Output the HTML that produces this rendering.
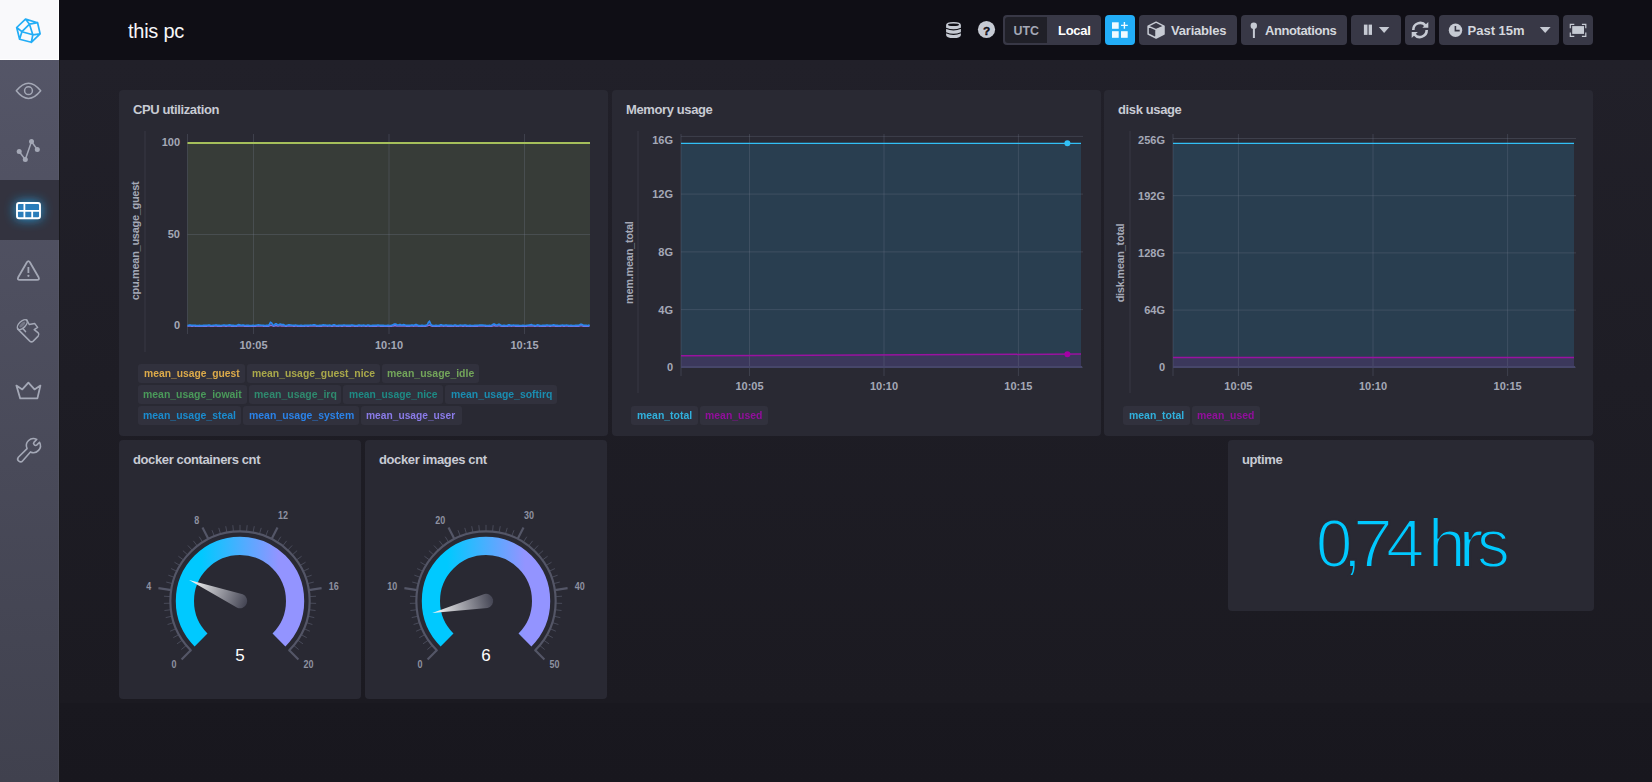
<!DOCTYPE html>
<html><head><meta charset="utf-8">
<style>
*{box-sizing:border-box;margin:0;padding:0}
html,body{width:1652px;height:782px;overflow:hidden;background:#1c1c21;font-family:"Liberation Sans",sans-serif}
#content{position:absolute;left:59px;top:60px;width:1593px;height:722px;background:linear-gradient(to bottom,#212029 0px,#1b1a21 643px,#19181f 643px,#18171e 722px);border-left:1px solid #19191d}
#sidebar{position:absolute;left:0;top:0;width:59px;height:782px;background:linear-gradient(to bottom,#565769 0%,#40414e 100%);border-right:1px solid rgba(255,255,255,0.04)}
#logo{position:absolute;left:0;top:0;width:59px;height:60px;background:#f9f9fb;border-right:1px solid #fff;border-bottom:1px solid #fff}
#activenav{position:absolute;left:0;top:180px;width:59px;height:60px;background:#33333f}
#header{position:absolute;left:59px;top:0;width:1593px;height:60px;background:#0f0e15}
#title{position:absolute;left:128px;top:20.8px;font-size:20px;line-height:20px;letter-spacing:-0.25px;color:#f6f6f8;white-space:nowrap}
.btn{position:absolute;top:15px;height:30px;background:#383846;border-radius:4px;color:#d4d7dd;font-weight:bold;font-size:13px;white-space:nowrap}
.btn span{position:absolute;top:8px}
.cell{position:absolute;background:#292933;border-radius:4px}
.cname{position:absolute;left:14px;top:11.8px;font-size:13px;font-weight:bold;color:#c8cbd4;white-space:nowrap;letter-spacing:-0.38px}
.lg{position:absolute;height:19px;border-radius:3px;background:#31313d}
.lgt{position:absolute;font-size:11.6px;line-height:14px;font-weight:bold;white-space:nowrap;transform-origin:0 0}
svg{position:absolute;left:0;top:0;overflow:visible}
.txt{position:absolute;white-space:nowrap}
</style></head><body>
<div id="content"></div>
<div id="header"></div>
<div id="title">this pc</div>
<div id="sidebar"></div>
<div id="activenav"></div>
<div id="logo"></div>

<!-- header buttons -->
<div class="btn" style="left:1003px;width:98px;background:#383846"></div>
<div class="btn" style="left:1005px;top:17px;width:42px;height:26px;background:#202028;border-radius:3px 0 0 3px"></div>
<div class="txt" style="left:1013.5px;top:23.6px;font-size:12.4px;color:#a4a8b6;font-weight:bold">UTC</div>
<div class="txt" style="left:1058px;top:23px;font-size:13px;color:#fff;font-weight:bold;letter-spacing:-0.3px">Local</div>
<div class="btn" style="left:1105px;width:30px;background:#22adf6"></div>
<div class="btn" style="left:1139px;width:98px"><span style="left:32px;letter-spacing:-0.2px">Variables</span></div>
<div class="btn" style="left:1241px;width:106px"><span style="left:24px;letter-spacing:-0.4px">Annotations</span></div>
<div class="btn" style="left:1351px;width:50px"></div>
<div class="btn" style="left:1405px;width:30px"></div>
<div class="btn" style="left:1439px;width:120px"><span style="left:28.5px">Past 15m</span></div>
<div class="btn" style="left:1563px;width:30px"></div>

<!-- cells -->
<div class="cell" style="left:119px;top:90px;width:489px;height:346px"><div class="cname">CPU utilization</div></div>
<div class="cell" style="left:612px;top:90px;width:489px;height:346px"><div class="cname">Memory usage</div></div>
<div class="cell" style="left:1104px;top:90px;width:489px;height:346px"><div class="cname">disk usage</div></div>
<div class="cell" style="left:119px;top:440px;width:242px;height:259px"><div class="cname">docker containers cnt</div></div>
<div class="cell" style="left:365px;top:440px;width:242px;height:259px"><div class="cname">docker images cnt</div></div>
<div class="cell" style="left:1228px;top:440px;width:366px;height:171px"><div class="cname">uptime</div></div>

<!--ICONS-->
<svg width="1652" height="782">
<defs><filter id="glow" x="-150%" y="-200%" width="400%" height="500%"><feGaussianBlur stdDeviation="6"/></filter></defs>
<path d="M25.5 19.1L37.6 22.7M37.6 22.7L40.1 33.8M40.1 33.8L31.3 42.3M31.3 42.3L19.6 39.2M19.6 39.2L16.7 27.5M16.7 27.5L25.5 19.1M25.5 19.1L29.5 24.2M29.5 24.2L37.6 22.7M29.5 24.2L21.9 31.7M16.7 27.5L21.9 31.7M21.9 31.7L32.8 34.8M29.5 24.2L32.8 34.8M32.8 34.8L40.1 33.8M32.8 34.8L31.3 42.3M21.9 31.7L19.6 39.2" stroke="#22adf6" stroke-width="1.7" stroke-linejoin="round" stroke-linecap="round" fill="none"/>
<path d="M16.3 90.8Q28.5 75.5 40.7 90.8Q28.5 106 16.3 90.8Z" stroke="#a4a8b6" stroke-width="1.5" fill="none" stroke-linejoin="round"/>
<circle cx="28.5" cy="90.7" r="3.9" stroke="#a4a8b6" stroke-width="1.5" fill="none"/>
<polyline points="19.2,151.5 25.3,159.6 31.5,141.5 37.3,149.5" stroke="#a4a8b6" stroke-width="1.5" fill="none"/>
<circle cx="19.2" cy="151.5" r="2.5" fill="#a4a8b6"/>
<circle cx="25.3" cy="159.6" r="2.5" fill="#a4a8b6"/>
<circle cx="31.5" cy="141.5" r="2.5" fill="#a4a8b6"/>
<circle cx="37.3" cy="149.5" r="2.5" fill="#a4a8b6"/>
<rect x="16" y="202" width="25" height="17" rx="3" fill="#22adf6" opacity="0.9" filter="url(#glow)"/>
<rect x="17" y="203" width="23" height="15.2" rx="2" fill="#2a7dba" stroke="#fff" stroke-width="1.9"/>
<path d="M17 210.8H40M24.4 203V218.2M32.2 210.8V218.2" stroke="#fff" stroke-width="1.8" fill="none"/>
<path d="M26.9 262.3Q28.4 260 29.9 262.3L38.6 277.3Q39.8 279.9 37.1 279.9H19.7Q17 279.9 18.2 277.3Z" stroke="#a4a8b6" stroke-width="1.8" fill="none" stroke-linejoin="round"/>
<path d="M28.4 267V273" stroke="#a4a8b6" stroke-width="1.8"/>
<circle cx="28.4" cy="275.8" r="1.1" fill="#a4a8b6"/>
<g stroke="#a4a8b6" stroke-width="1.5" fill="none" stroke-linejoin="round" stroke-linecap="round"><ellipse cx="22.3" cy="324.6" rx="6.2" ry="3.2" transform="rotate(-45 22.3 324.6)"/><path d="M17.6 328.9L29.8 341.1Q31.5 342.6 33.2 341.1L38.2 336.1Q39.6 334.4 38.2 332.8L34.2 329.6L37.6 327.4L34.6 323.4L29.2 324.5L26.7 319.8"/><path d="M23.3 329.1L25.5 331.6"/></g>
<ellipse cx="22.3" cy="324.6" rx="3.8" ry="1.5" transform="rotate(-45 22.3 324.6)" fill="#a4a8b6" opacity="0.45"/>
<path d="M20.2 398.4H37.4L40.4 385.6L34.5 389.4L28.4 382.6L22.3 389.4L16.4 385.6Z" stroke="#a4a8b6" stroke-width="1.8" fill="none" stroke-linejoin="round"/>
<path d="M27.06 448.56L18.34 457.26A2.4 2.4 0 0 0 22.74 460.66L30.44 451.94A7 7 0 0 0 39.56 442.27L36.93 444.89A2 2 0 0 1 34.11 442.07L36.73 439.44A7 7 0 0 0 27.06 448.56Z" stroke="#a4a8b6" stroke-width="1.6" fill="none" stroke-linejoin="round"/>
<g><path d="M946.1 25Q946.1 22 953.5 22Q960.9 22 960.9 25V35Q960.9 38.1 953.5 38.1Q946.1 38.1 946.1 35Z" fill="#c6cad3"/><ellipse cx="953.5" cy="24.7" rx="5.6" ry="1.3" fill="#0f0e15"/><path d="M946 28.2Q953.5 31.6 961 28.2M946 32.7Q953.5 36.1 961 32.7" stroke="#0f0e15" stroke-width="1.1" fill="none"/></g>
<circle cx="986.5" cy="29.5" r="8.6" fill="#c6cad3"/>
<text x="986.6" y="34.9" text-anchor="middle" font-family="Liberation Sans" font-weight="bold" font-size="11.8" fill="#0f0e15" stroke="#0f0e15" stroke-width="0.4">?</text>
<g fill="#f0faff"><rect x="1112" y="22.3" width="6.7" height="6.5"/><rect x="1112" y="31.2" width="6.7" height="6.6"/><rect x="1121" y="31.2" width="6.7" height="6.6"/></g>
<path d="M1124.4 22V28.8M1121 25.4H1127.8" stroke="#f0faff" stroke-width="1.4"/>
<path d="M1156 29.2L1164 26.1V34L1156 38Z" fill="#c6cad3"/>
<path d="M1156.1 22.2L1164 26.1V34L1156.1 38L1148.1 34V26.1Z M1148.1 26.1L1156 29.6L1164 26.1 M1156 29.6V38" stroke="#c6cad3" stroke-width="1.5" fill="none" stroke-linejoin="round"/>
<circle cx="1253.8" cy="25.8" r="3.2" fill="#c6cad3"/><rect x="1252.9" y="27" width="2" height="11" fill="#c6cad3"/>
<rect x="1363.9" y="24.6" width="3.6" height="10.3" fill="#c6cad3"/><rect x="1368.6" y="24.6" width="3.4" height="10.3" fill="#c6cad3"/>
<path d="M1378.9 27H1389.4L1384.1 33Z" fill="#c6cad3"/>
<g fill="none" stroke="#c6cad3" stroke-width="2.6"><path d="M1413.3 30A6.9 6.9 0 0 1 1425.6 25.6"/><path d="M1426.7 30A6.9 6.9 0 0 1 1414.4 34.4"/></g>
<path d="M1428.3 21.9V27.8H1422.3Z" fill="#c6cad3"/><path d="M1411.7 38V32H1417.8Z" fill="#c6cad3"/>
<circle cx="1455.5" cy="30.2" r="6.7" fill="#c6cad3"/><path d="M1455.4 26V30.6H1459.7" stroke="#383846" stroke-width="1.6" fill="none"/>
<path d="M1539.8 27H1550.6L1545.2 33Z" fill="#c6cad3"/>
<rect x="1572.2" y="26.1" width="11.8" height="7.8" fill="#c6cad3"/>
<path d="M1570.3 28.2V24.4H1574.3M1581.9 24.4H1585.8V28.2M1585.8 32.6V36.4H1581.9M1574.3 36.4H1570.3V32.6" stroke="#c6cad3" stroke-width="1.2" fill="none"/>
</svg>
<!--CHARTS-->
<svg width="1652" height="782" style="font-family:'Liberation Sans',sans-serif">
<line x1="145" y1="131" x2="145" y2="352" stroke="#33333f" stroke-width="1.5"/>
<rect x="187.5" y="143" width="402.5" height="182.5" fill="#373c38"/>
<line x1="187.5" y1="143.5" x2="590" y2="143.5" stroke="rgba(120,125,142,0.28)" stroke-width="1"/>
<line x1="187.5" y1="234.5" x2="590" y2="234.5" stroke="rgba(120,125,142,0.28)" stroke-width="1"/>
<line x1="187.5" y1="325.5" x2="590" y2="325.5" stroke="rgba(120,125,142,0.28)" stroke-width="1"/>
<line x1="187.5" y1="134" x2="187.5" y2="334" stroke="rgba(120,125,142,0.28)" stroke-width="1"/>
<line x1="253.5" y1="134" x2="253.5" y2="334" stroke="rgba(120,125,142,0.28)" stroke-width="1"/>
<line x1="389" y1="134" x2="389" y2="334" stroke="rgba(120,125,142,0.28)" stroke-width="1"/>
<line x1="524.5" y1="134" x2="524.5" y2="334" stroke="rgba(120,125,142,0.28)" stroke-width="1"/>
<line x1="187.5" y1="143" x2="590" y2="143" stroke="#a5bf5b" stroke-width="2"/>
<polyline points="187.5,326.22 188.5,326.17 189.5,326.13 190.5,326.14 191.5,326.18 192.5,326.19 193.5,326.16 194.5,326.15 195.5,326.19 196.5,326.25 197.5,326.26 198.5,326.23 199.5,326.21 200.5,326.24 201.5,326.27 202.5,326.24 203.5,326.18 204.5,326.15 205.5,326.18 206.5,326.20 207.5,326.17 208.5,326.13 209.5,326.13 210.5,326.18 211.5,326.22 212.5,326.21 213.5,326.19 214.5,326.15 215.5,326.08 216.5,326.10 217.5,326.18 218.5,326.20 219.5,326.20 220.5,326.23 221.5,326.22 222.5,326.17 223.5,326.13 224.5,326.14 225.5,326.19 226.5,326.19 227.5,326.16 228.5,326.11 229.5,326.07 230.5,326.12 231.5,326.21 232.5,326.22 233.5,326.21 234.5,326.25 235.5,326.27 236.5,326.23 237.5,326.12 238.5,326.00 239.5,326.03 240.5,326.15 241.5,326.16 242.5,326.12 243.5,326.14 244.5,326.19 245.5,326.22 246.5,326.20 247.5,326.19 248.5,326.22 249.5,326.27 250.5,326.28 251.5,326.23 252.5,326.20 253.5,326.21 254.5,326.23 255.5,326.21 256.5,326.16 257.5,326.09 258.5,326.04 259.5,326.08 260.5,326.15 261.5,326.15 262.5,326.15 263.5,326.21 264.5,326.26 265.5,326.25 266.5,326.21 267.5,326.22 268.5,326.25 269.5,325.83 270.5,325.29 271.5,325.44 272.5,325.92 273.5,326.19 274.5,326.06 275.5,325.75 276.5,325.72 277.5,326.01 278.5,326.08 279.5,325.86 280.5,325.84 281.5,325.97 282.5,325.93 283.5,325.98 284.5,326.17 285.5,326.23 286.5,326.20 287.5,326.15 288.5,326.03 289.5,326.01 290.5,326.08 291.5,326.13 292.5,326.16 293.5,326.19 294.5,326.18 295.5,326.15 296.5,326.16 297.5,326.22 298.5,326.26 299.5,326.24 300.5,326.21 301.5,326.22 302.5,326.26 303.5,326.27 304.5,326.22 305.5,326.17 306.5,326.17 307.5,326.20 308.5,326.19 309.5,326.15 310.5,326.12 311.5,326.15 312.5,326.14 313.5,326.04 314.5,326.01 315.5,326.13 316.5,326.23 317.5,326.28 318.5,326.27 319.5,326.22 320.5,326.20 321.5,326.18 322.5,326.10 323.5,326.07 324.5,326.10 325.5,326.13 326.5,326.17 327.5,326.19 328.5,326.17 329.5,326.14 330.5,326.16 331.5,326.22 332.5,326.20 333.5,326.05 334.5,326.03 335.5,326.17 336.5,326.27 337.5,326.26 338.5,326.21 339.5,326.17 340.5,326.17 341.5,326.20 342.5,326.19 343.5,326.14 344.5,326.12 345.5,326.16 346.5,326.21 347.5,326.21 348.5,326.18 349.5,326.19 350.5,326.19 351.5,326.12 352.5,326.10 353.5,326.16 354.5,326.20 355.5,326.23 356.5,326.24 357.5,326.19 358.5,326.14 359.5,326.14 360.5,326.17 361.5,326.19 362.5,326.16 363.5,326.14 364.5,326.17 365.5,326.23 366.5,326.22 367.5,326.14 368.5,326.12 369.5,326.20 370.5,326.27 371.5,326.26 372.5,326.20 373.5,326.17 374.5,326.18 375.5,326.20 376.5,326.18 377.5,326.13 378.5,326.12 379.5,326.17 380.5,326.21 381.5,326.21 382.5,326.18 383.5,326.19 384.5,326.25 385.5,326.28 386.5,326.25 387.5,326.21 388.5,326.21 389.5,326.24 390.5,326.24 391.5,326.18 392.5,326.14 393.5,325.95 394.5,325.80 395.5,325.80 396.5,325.96 397.5,326.14 398.5,326.09 399.5,325.97 400.5,325.98 401.5,326.13 402.5,326.13 403.5,325.99 404.5,326.03 405.5,326.17 406.5,326.20 407.5,326.17 408.5,326.19 409.5,326.21 410.5,326.17 411.5,326.13 412.5,326.13 413.5,326.18 414.5,326.14 415.5,325.97 416.5,325.95 417.5,326.12 418.5,326.25 419.5,326.28 420.5,326.24 421.5,326.21 422.5,326.21 423.5,326.24 424.5,326.23 425.5,326.18 426.5,326.13 427.5,325.94 428.5,325.29 429.5,325.01 430.5,325.67 431.5,326.14 432.5,326.19 433.5,326.24 434.5,326.24 435.5,326.21 436.5,326.21 437.5,326.25 438.5,326.28 439.5,326.20 440.5,326.05 441.5,326.04 442.5,326.15 443.5,326.21 444.5,326.17 445.5,326.12 446.5,326.13 447.5,326.18 448.5,326.21 449.5,326.19 450.5,326.17 451.5,326.21 452.5,326.26 453.5,326.24 454.5,326.12 455.5,326.09 456.5,326.18 457.5,326.25 458.5,326.23 459.5,326.17 460.5,326.13 461.5,326.16 462.5,326.19 463.5,326.18 464.5,326.14 465.5,326.14 466.5,326.20 467.5,326.24 468.5,326.24 469.5,326.21 470.5,326.21 471.5,326.26 472.5,326.28 473.5,326.24 474.5,326.18 475.5,326.18 476.5,326.20 477.5,326.20 478.5,326.16 479.5,326.12 480.5,326.10 481.5,326.08 482.5,326.10 483.5,326.15 484.5,326.17 485.5,326.21 486.5,326.27 487.5,326.27 488.5,326.23 489.5,326.20 490.5,326.23 491.5,326.18 492.5,326.03 493.5,325.84 494.5,325.81 495.5,325.97 496.5,326.13 497.5,326.08 498.5,325.87 499.5,325.88 500.5,326.11 501.5,326.24 502.5,326.23 503.5,326.20 504.5,326.22 505.5,326.26 506.5,326.27 507.5,326.19 508.5,326.07 509.5,326.07 510.5,326.17 511.5,326.20 512.5,326.15 513.5,326.12 514.5,326.15 515.5,326.19 516.5,326.20 517.5,326.18 518.5,326.17 519.5,326.22 520.5,326.27 521.5,326.26 522.5,326.22 523.5,326.21 524.5,326.23 525.5,326.25 526.5,326.21 527.5,326.15 528.5,326.14 529.5,326.11 530.5,326.01 531.5,325.98 532.5,326.07 533.5,326.15 534.5,326.21 535.5,326.24 536.5,326.17 537.5,326.04 538.5,326.07 539.5,326.22 540.5,326.27 541.5,326.22 542.5,326.18 543.5,326.19 544.5,326.21 545.5,326.20 546.5,326.14 547.5,326.12 548.5,326.15 549.5,326.20 550.5,326.20 551.5,326.17 552.5,326.12 553.5,326.05 554.5,326.09 555.5,326.20 556.5,326.22 557.5,326.21 558.5,326.24 559.5,326.25 560.5,326.21 561.5,326.15 562.5,326.14 563.5,326.18 564.5,326.19 565.5,326.16 566.5,326.13 567.5,326.16 568.5,326.22 569.5,326.24 570.5,326.22 571.5,326.20 572.5,326.23 573.5,326.27 574.5,326.27 575.5,326.21 576.5,326.18 577.5,326.19 578.5,326.22 579.5,326.07 580.5,325.90 581.5,325.88 582.5,326.04 583.5,326.20 584.5,326.19 585.5,326.17 586.5,326.18 587.5,326.24 588.5,326.27 589.5,325.97" fill="none" stroke="#8a6fe0" stroke-width="1.4"/>
<polyline points="187.5,325.48 188.5,325.31 189.5,325.16 190.5,325.19 191.5,325.34 192.5,325.38 193.5,325.28 194.5,325.24 195.5,325.37 196.5,325.56 197.5,325.60 198.5,325.49 199.5,325.43 200.5,325.53 201.5,325.62 202.5,325.54 203.5,325.34 204.5,325.25 205.5,325.32 206.5,325.39 207.5,325.30 208.5,325.16 209.5,325.17 210.5,325.35 211.5,325.48 212.5,325.44 213.5,325.36 214.5,325.23 215.5,325.00 216.5,325.07 217.5,325.34 218.5,325.40 219.5,325.41 220.5,325.50 221.5,325.47 222.5,325.28 223.5,325.15 224.5,325.22 225.5,325.35 226.5,325.36 227.5,325.26 228.5,325.09 229.5,324.95 230.5,325.13 231.5,325.43 232.5,325.47 233.5,325.44 234.5,325.55 235.5,325.63 236.5,325.52 237.5,325.15 238.5,324.73 239.5,324.82 240.5,325.22 241.5,325.28 242.5,325.15 243.5,325.19 244.5,325.37 245.5,325.48 246.5,325.41 247.5,325.35 248.5,325.45 249.5,325.62 250.5,325.66 251.5,325.51 252.5,325.39 253.5,325.43 254.5,325.51 255.5,325.45 256.5,325.26 257.5,325.03 258.5,324.87 259.5,324.99 260.5,325.22 261.5,325.24 262.5,325.25 263.5,325.43 264.5,325.59 265.5,325.56 266.5,325.45 267.5,325.45 268.5,325.58 269.5,324.16 270.5,322.38 271.5,322.85 272.5,324.46 273.5,325.37 274.5,324.94 275.5,323.90 276.5,323.79 277.5,324.76 278.5,325.00 279.5,324.27 280.5,324.19 281.5,324.62 282.5,324.50 283.5,324.67 284.5,325.32 285.5,325.49 286.5,325.39 287.5,325.23 288.5,324.85 289.5,324.75 290.5,325.01 291.5,325.16 292.5,325.27 293.5,325.37 294.5,325.32 295.5,325.22 296.5,325.26 297.5,325.46 298.5,325.59 299.5,325.54 300.5,325.43 301.5,325.47 302.5,325.60 303.5,325.62 304.5,325.46 305.5,325.29 306.5,325.29 307.5,325.39 308.5,325.38 309.5,325.22 310.5,325.13 311.5,325.24 312.5,325.21 313.5,324.85 314.5,324.77 315.5,325.15 316.5,325.50 317.5,325.65 318.5,325.62 319.5,325.46 320.5,325.40 321.5,325.33 322.5,325.08 323.5,324.95 324.5,325.06 325.5,325.17 326.5,325.29 327.5,325.37 328.5,325.30 329.5,325.21 330.5,325.28 331.5,325.48 332.5,325.39 333.5,324.91 334.5,324.83 335.5,325.29 336.5,325.62 337.5,325.61 338.5,325.43 339.5,325.29 340.5,325.32 341.5,325.40 342.5,325.36 343.5,325.20 344.5,325.14 345.5,325.26 346.5,325.43 347.5,325.44 348.5,325.35 349.5,325.36 350.5,325.35 351.5,325.14 352.5,325.07 353.5,325.27 354.5,325.41 355.5,325.50 356.5,325.53 357.5,325.38 358.5,325.20 359.5,325.19 360.5,325.31 361.5,325.37 362.5,325.28 363.5,325.20 364.5,325.31 365.5,325.51 366.5,325.48 367.5,325.19 368.5,325.12 369.5,325.41 370.5,325.64 371.5,325.60 372.5,325.41 373.5,325.29 374.5,325.34 375.5,325.41 376.5,325.34 377.5,325.18 378.5,325.14 379.5,325.29 380.5,325.44 381.5,325.42 382.5,325.33 383.5,325.38 384.5,325.56 385.5,325.66 386.5,325.57 387.5,325.43 388.5,325.42 389.5,325.52 390.5,325.52 391.5,325.35 392.5,325.19 393.5,324.57 394.5,324.05 395.5,324.08 396.5,324.61 397.5,325.20 398.5,325.03 399.5,324.62 400.5,324.67 401.5,325.17 402.5,325.15 403.5,324.71 404.5,324.82 405.5,325.30 406.5,325.38 407.5,325.29 408.5,325.36 409.5,325.42 410.5,325.32 411.5,325.16 412.5,325.16 413.5,325.32 414.5,325.19 415.5,324.64 416.5,324.57 417.5,325.15 418.5,325.58 419.5,325.66 420.5,325.55 421.5,325.42 422.5,325.44 423.5,325.54 424.5,325.51 425.5,325.32 426.5,325.18 427.5,324.54 428.5,322.36 429.5,321.44 430.5,323.62 431.5,325.20 432.5,325.36 433.5,325.54 434.5,325.55 435.5,325.44 436.5,325.43 437.5,325.56 438.5,325.65 439.5,325.40 440.5,324.91 441.5,324.85 442.5,325.24 443.5,325.42 444.5,325.29 445.5,325.14 446.5,325.17 447.5,325.34 448.5,325.44 449.5,325.37 450.5,325.31 451.5,325.42 452.5,325.60 453.5,325.52 454.5,325.15 455.5,325.04 456.5,325.34 457.5,325.55 458.5,325.49 459.5,325.29 460.5,325.18 461.5,325.25 462.5,325.36 463.5,325.33 464.5,325.21 465.5,325.21 466.5,325.39 467.5,325.55 468.5,325.53 469.5,325.43 470.5,325.45 471.5,325.59 472.5,325.65 473.5,325.52 474.5,325.35 475.5,325.32 476.5,325.41 477.5,325.41 478.5,325.26 479.5,325.13 480.5,325.07 481.5,324.99 482.5,325.05 483.5,325.22 484.5,325.31 485.5,325.44 486.5,325.62 487.5,325.63 488.5,325.50 489.5,325.42 490.5,325.49 491.5,325.35 492.5,324.82 493.5,324.19 494.5,324.10 495.5,324.63 496.5,325.15 497.5,325.01 498.5,324.29 499.5,324.32 500.5,325.11 501.5,325.55 502.5,325.51 503.5,325.41 504.5,325.46 505.5,325.61 506.5,325.65 507.5,325.37 508.5,324.96 509.5,324.96 510.5,325.30 511.5,325.40 512.5,325.24 513.5,325.13 514.5,325.22 515.5,325.38 516.5,325.41 517.5,325.32 518.5,325.31 519.5,325.47 520.5,325.63 521.5,325.62 522.5,325.47 523.5,325.42 524.5,325.51 525.5,325.57 526.5,325.44 527.5,325.25 528.5,325.20 529.5,325.10 530.5,324.77 531.5,324.68 532.5,324.98 533.5,325.24 534.5,325.44 535.5,325.55 536.5,325.31 537.5,324.88 538.5,324.96 539.5,325.46 540.5,325.64 541.5,325.47 542.5,325.33 543.5,325.36 544.5,325.44 545.5,325.39 546.5,325.21 547.5,325.13 548.5,325.25 549.5,325.40 550.5,325.40 551.5,325.30 552.5,325.12 553.5,324.90 554.5,325.04 555.5,325.39 556.5,325.46 557.5,325.43 558.5,325.54 559.5,325.57 560.5,325.42 561.5,325.23 562.5,325.21 563.5,325.33 564.5,325.37 565.5,325.26 566.5,325.17 567.5,325.27 568.5,325.46 569.5,325.54 570.5,325.46 571.5,325.40 572.5,325.51 573.5,325.65 574.5,325.62 575.5,325.44 576.5,325.33 577.5,325.38 578.5,325.45 579.5,324.96 580.5,324.39 581.5,324.34 582.5,324.87 583.5,325.40 584.5,325.38 585.5,325.29 586.5,325.34 587.5,325.53 588.5,325.64 589.5,324.64" fill="none" stroke="#2a86ee" stroke-width="1.7"/>
<text x="180" y="146" text-anchor="end" font-size="11" font-weight="bold" fill="#a4a8b6">100</text>
<text x="180" y="238" text-anchor="end" font-size="11" font-weight="bold" fill="#a4a8b6">50</text>
<text x="180" y="329" text-anchor="end" font-size="11" font-weight="bold" fill="#a4a8b6">0</text>
<text x="253.5" y="348.5" text-anchor="middle" font-size="11" font-weight="bold" fill="#a4a8b6">10:05</text>
<text x="389" y="348.5" text-anchor="middle" font-size="11" font-weight="bold" fill="#a4a8b6">10:10</text>
<text x="524.5" y="348.5" text-anchor="middle" font-size="11" font-weight="bold" fill="#a4a8b6">10:15</text>
<text transform="translate(139.3,241) rotate(-90)" text-anchor="middle" font-size="11" font-weight="bold" letter-spacing="-0.3" fill="#a4a8b6">cpu.mean_usage_guest</text>
<line x1="638" y1="131" x2="638" y2="393" stroke="#33333f" stroke-width="1.5"/>
<rect x="681" y="143.3" width="400" height="224" fill="#293e50"/>
<path d="M681 355.8L1081 354.1V367.3H681Z" fill="#3b385c"/>
<line x1="681" y1="136.4" x2="1083" y2="136.4" stroke="rgba(120,125,142,0.28)" stroke-width="1"/>
<line x1="681" y1="194.1" x2="1083" y2="194.1" stroke="rgba(120,125,142,0.28)" stroke-width="1"/>
<line x1="681" y1="251.9" x2="1083" y2="251.9" stroke="rgba(120,125,142,0.28)" stroke-width="1"/>
<line x1="681" y1="309.6" x2="1083" y2="309.6" stroke="rgba(120,125,142,0.28)" stroke-width="1"/>
<line x1="681" y1="367.3" x2="1083" y2="367.3" stroke="rgba(120,125,142,0.28)" stroke-width="1"/>
<line x1="681" y1="134" x2="681" y2="376" stroke="rgba(120,125,142,0.28)" stroke-width="1"/>
<line x1="749.5" y1="134" x2="749.5" y2="376" stroke="rgba(120,125,142,0.28)" stroke-width="1"/>
<line x1="884" y1="134" x2="884" y2="376" stroke="rgba(120,125,142,0.28)" stroke-width="1"/>
<line x1="1018.4" y1="134" x2="1018.4" y2="376" stroke="rgba(120,125,142,0.28)" stroke-width="1"/>
<line x1="681" y1="367" x2="1082" y2="367" stroke="#46466a" stroke-width="2"/>
<line x1="681" y1="143.3" x2="1081" y2="143.3" stroke="#31c0f6" stroke-width="1.3"/>
<line x1="681" y1="355.8" x2="1081" y2="354.1" stroke="#9a12a0" stroke-width="1.5"/>
<circle cx="1067.4" cy="143.3" r="3" fill="#31c0f6"/>
<circle cx="1067.4" cy="354.16" r="3" fill="#a500a5"/>
<text x="673" y="144.0" text-anchor="end" font-size="11" font-weight="bold" fill="#a4a8b6">16G</text>
<text x="673" y="198.125" text-anchor="end" font-size="11" font-weight="bold" fill="#a4a8b6">12G</text>
<text x="673" y="255.85000000000002" text-anchor="end" font-size="11" font-weight="bold" fill="#a4a8b6">8G</text>
<text x="673" y="313.57500000000005" text-anchor="end" font-size="11" font-weight="bold" fill="#a4a8b6">4G</text>
<text x="673" y="371.3" text-anchor="end" font-size="11" font-weight="bold" fill="#a4a8b6">0</text>
<text x="749.5" y="389.8" text-anchor="middle" font-size="11" font-weight="bold" fill="#a4a8b6">10:05</text>
<text x="884" y="389.8" text-anchor="middle" font-size="11" font-weight="bold" fill="#a4a8b6">10:10</text>
<text x="1018.4" y="389.8" text-anchor="middle" font-size="11" font-weight="bold" fill="#a4a8b6">10:15</text>
<text transform="translate(632.5,262.7) rotate(-90)" text-anchor="middle" font-size="11" font-weight="bold" letter-spacing="-0.3" fill="#a4a8b6">mem.mean_total</text>
<line x1="1130" y1="131" x2="1130" y2="393" stroke="#33333f" stroke-width="1.5"/>
<rect x="1173" y="143.3" width="401" height="224" fill="#293e50"/>
<path d="M1173 357.6L1574 357.6V367.3H1173Z" fill="#3b385c"/>
<line x1="1173" y1="138.5" x2="1576" y2="138.5" stroke="rgba(120,125,142,0.28)" stroke-width="1"/>
<line x1="1173" y1="195.7" x2="1576" y2="195.7" stroke="rgba(120,125,142,0.28)" stroke-width="1"/>
<line x1="1173" y1="252.9" x2="1576" y2="252.9" stroke="rgba(120,125,142,0.28)" stroke-width="1"/>
<line x1="1173" y1="310.1" x2="1576" y2="310.1" stroke="rgba(120,125,142,0.28)" stroke-width="1"/>
<line x1="1173" y1="367.3" x2="1576" y2="367.3" stroke="rgba(120,125,142,0.28)" stroke-width="1"/>
<line x1="1173" y1="134" x2="1173" y2="376" stroke="rgba(120,125,142,0.28)" stroke-width="1"/>
<line x1="1238.4" y1="134" x2="1238.4" y2="376" stroke="rgba(120,125,142,0.28)" stroke-width="1"/>
<line x1="1373" y1="134" x2="1373" y2="376" stroke="rgba(120,125,142,0.28)" stroke-width="1"/>
<line x1="1507.6" y1="134" x2="1507.6" y2="376" stroke="rgba(120,125,142,0.28)" stroke-width="1"/>
<line x1="1173" y1="367" x2="1575" y2="367" stroke="#46466a" stroke-width="2"/>
<line x1="1173" y1="143.3" x2="1574" y2="143.3" stroke="#31c0f6" stroke-width="1.3"/>
<line x1="1173" y1="357.6" x2="1574" y2="357.6" stroke="#9a12a0" stroke-width="1.5"/>
<text x="1165" y="144.0" text-anchor="end" font-size="11" font-weight="bold" fill="#a4a8b6">256G</text>
<text x="1165" y="199.7" text-anchor="end" font-size="11" font-weight="bold" fill="#a4a8b6">192G</text>
<text x="1165" y="256.9" text-anchor="end" font-size="11" font-weight="bold" fill="#a4a8b6">128G</text>
<text x="1165" y="314.1" text-anchor="end" font-size="11" font-weight="bold" fill="#a4a8b6">64G</text>
<text x="1165" y="371.3" text-anchor="end" font-size="11" font-weight="bold" fill="#a4a8b6">0</text>
<text x="1238.4" y="389.8" text-anchor="middle" font-size="11" font-weight="bold" fill="#a4a8b6">10:05</text>
<text x="1373" y="389.8" text-anchor="middle" font-size="11" font-weight="bold" fill="#a4a8b6">10:10</text>
<text x="1507.6" y="389.8" text-anchor="middle" font-size="11" font-weight="bold" fill="#a4a8b6">10:15</text>
<text transform="translate(1123.5,263) rotate(-90)" text-anchor="middle" font-size="11" font-weight="bold" letter-spacing="-0.3" fill="#a4a8b6">disk.mean_total</text>
</svg>
<div class="lg" style="left:138.0px;top:364.0px;width:106.8px"></div><div class="lgt" style="left:143.62px;top:366.2px;color:#dcaa4a;transform:scaleX(0.8899)">mean_usage_guest</div>
<div class="lg" style="left:247.2px;top:364.0px;width:132.8px"></div><div class="lgt" style="left:252.28px;top:366.2px;color:#a9a84a;transform:scaleX(0.8971)">mean_usage_guest_nice</div>
<div class="lg" style="left:382.0px;top:364.0px;width:96.9px"></div><div class="lgt" style="left:387.44px;top:366.2px;color:#73a55a;transform:scaleX(0.9025)">mean_usage_idle</div>
<div class="lg" style="left:138.0px;top:385.0px;width:108.8px"></div><div class="lgt" style="left:143.44px;top:387.2px;color:#4a9a5a;transform:scaleX(0.9014)">mean_usage_iowait</div>
<div class="lg" style="left:249.2px;top:385.0px;width:91.6px"></div><div class="lgt" style="left:254.47px;top:387.2px;color:#2f8a6e;transform:scaleX(0.9049)">mean_usage_irq</div>
<div class="lg" style="left:342.9px;top:385.0px;width:99.9px"></div><div class="lgt" style="left:349.41px;top:387.2px;color:#1e8a84;transform:scaleX(0.8860)">mean_usage_nice</div>
<div class="lg" style="left:445.0px;top:385.0px;width:111.8px"></div><div class="lgt" style="left:451.40px;top:387.2px;color:#1a8db0;transform:scaleX(0.8984)">mean_usage_softirq</div>
<div class="lg" style="left:138.0px;top:406.1px;width:102.9px"></div><div class="lgt" style="left:143.44px;top:408.3px;color:#1a8ccf;transform:scaleX(0.9019)">mean_usage_steal</div>
<div class="lg" style="left:243.0px;top:406.1px;width:115.6px"></div><div class="lgt" style="left:249.27px;top:408.3px;color:#2a82e8;transform:scaleX(0.9021)">mean_usage_system</div>
<div class="lg" style="left:361.0px;top:406.1px;width:100.9px"></div><div class="lgt" style="left:366.49px;top:408.3px;color:#8a7be8;transform:scaleX(0.8817)">mean_usage_user</div>
<div class="lg" style="left:630.9px;top:405.9px;width:66.8px"></div><div class="lgt" style="left:636.75px;top:408.1px;color:#30b0dc;transform:scaleX(0.9010)">mean_total</div>
<div class="lg" style="left:699.9px;top:405.9px;width:68.1px"></div><div class="lgt" style="left:705.48px;top:408.1px;color:#920e9c;transform:scaleX(0.8998)">mean_used</div>
<div class="lg" style="left:1122.9px;top:405.9px;width:66.8px"></div><div class="lgt" style="left:1128.75px;top:408.1px;color:#30b0dc;transform:scaleX(0.9010)">mean_total</div>
<div class="lg" style="left:1191.9px;top:405.9px;width:68.1px"></div><div class="lgt" style="left:1197.48px;top:408.1px;color:#920e9c;transform:scaleX(0.8998)">mean_used</div>
<!--GAUGES-->
<svg width="1652" height="782" style="font-family:'Liberation Sans',sans-serif">
<defs><linearGradient id="gg1" gradientUnits="userSpaceOnUse" x1="201.04" y1="0" x2="278.96" y2="0"><stop offset="0" stop-color="#00c9ff"/><stop offset="1" stop-color="#9394ff"/></linearGradient><linearGradient id="ng1" gradientUnits="userSpaceOnUse" x1="0" y1="-7.199999999999999" x2="0" y2="55.1"><stop offset="0" stop-color="#434453"/><stop offset="1" stop-color="#ffffff"/></linearGradient></defs>
<path d="M201.04 639.96A55.1 55.1 0 1 1 278.96 639.96" stroke="url(#gg1)" stroke-width="18.2" fill="none"/>
<path d="M190.74 650.26A69.66 69.66 0 1 1 289.26 650.26" stroke="#545667" stroke-width="2.16" stroke-linecap="round" fill="none"/>
<path d="M190.74 650.26L181.58 659.42M171.20 590.10L158.40 588.08M208.38 538.93L202.49 527.39M271.62 538.93L277.51 527.39M308.80 590.10L321.60 588.08M289.26 650.26L298.42 659.42" stroke="#545667" stroke-width="2.16" fill="none"/>
<path d="M190.74 650.26L186.16 654.84M186.33 645.40L181.33 649.53M182.39 640.15L177.03 643.80M178.96 634.56L173.28 637.68M176.07 628.67L170.12 631.24M173.75 622.53L167.59 624.53M172.02 616.20L165.69 617.61M170.89 609.73L164.46 610.54M170.37 603.19L163.90 603.39M170.48 596.63L164.01 596.22M171.20 590.10L164.80 589.09M172.53 583.68L166.25 582.06M174.46 577.40L168.36 575.21M176.97 571.34L171.11 568.58M180.04 565.54L174.46 562.24M183.64 560.05L178.40 556.25M187.75 554.93L182.89 550.65M192.31 550.22L187.88 545.50M197.30 545.96L193.33 540.84M202.67 542.18L199.20 536.71M208.38 538.93L205.43 533.16M214.36 536.23L211.97 530.21M220.57 534.11L218.76 527.88M226.95 532.57L225.73 526.21M233.44 531.65L232.83 525.20M240.00 531.34L240.00 524.86M246.56 531.65L247.17 525.20M253.05 532.57L254.27 526.21M259.43 534.11L261.24 527.88M265.64 536.23L268.03 530.21M271.62 538.93L274.57 533.16M277.33 542.18L280.80 536.71M282.70 545.96L286.67 540.84M287.69 550.22L292.12 545.50M292.25 554.93L297.11 550.65M296.36 560.05L301.60 556.25M299.96 565.54L305.54 562.24M303.03 571.34L308.89 568.58M305.54 577.40L311.64 575.21M307.47 583.68L313.75 582.06M308.80 590.10L315.20 589.09M309.52 596.63L315.99 596.22M309.63 603.19L316.10 603.39M309.11 609.73L315.54 610.54M307.98 616.20L314.31 617.61M306.25 622.53L312.41 624.53M303.93 628.67L309.88 631.24M301.04 634.56L306.72 637.68M297.61 640.15L302.97 643.80M293.67 645.40L298.67 649.53M289.26 650.26L293.84 654.84" stroke="#545667" stroke-width="0.72" fill="none"/>
<text transform="translate(176.46 667.59) scale(0.8 1)" text-anchor="end" font-weight="bold" font-size="11.2" fill="#8e91a1">0</text>
<text transform="translate(151.25 589.99) scale(0.8 1)" text-anchor="end" font-weight="bold" font-size="11.2" fill="#8e91a1">4</text>
<text transform="translate(199.20 523.98) scale(0.8 1)" text-anchor="end" font-weight="bold" font-size="11.2" fill="#8e91a1">8</text>
<text transform="translate(283.07 518.73) scale(0.8 1)" text-anchor="middle" font-weight="bold" font-size="11.2" fill="#8e91a1">12</text>
<text transform="translate(328.75 589.99) scale(0.8 1)" text-anchor="start" font-weight="bold" font-size="11.2" fill="#8e91a1">16</text>
<text transform="translate(303.54 667.59) scale(0.8 1)" text-anchor="start" font-weight="bold" font-size="11.2" fill="#8e91a1">20</text>
<g transform="translate(240 601) rotate(112.5)"><path d="M7.199999999999999 0A7.199999999999999 7.199999999999999 0 0 0 -7.199999999999999 0L0 55.1Z" fill="url(#ng1)"/></g>
<text x="240" y="660.90" text-anchor="middle" font-size="17" fill="#ffffff">5</text>
<defs><linearGradient id="gg2" gradientUnits="userSpaceOnUse" x1="447.04" y1="0" x2="524.96" y2="0"><stop offset="0" stop-color="#00c9ff"/><stop offset="1" stop-color="#9394ff"/></linearGradient><linearGradient id="ng2" gradientUnits="userSpaceOnUse" x1="0" y1="-7.199999999999999" x2="0" y2="55.1"><stop offset="0" stop-color="#434453"/><stop offset="1" stop-color="#ffffff"/></linearGradient></defs>
<path d="M447.04 639.96A55.1 55.1 0 1 1 524.96 639.96" stroke="url(#gg2)" stroke-width="18.2" fill="none"/>
<path d="M436.74 650.26A69.66 69.66 0 1 1 535.26 650.26" stroke="#545667" stroke-width="2.16" stroke-linecap="round" fill="none"/>
<path d="M436.74 650.26L427.58 659.42M417.20 590.10L404.40 588.08M454.38 538.93L448.49 527.39M517.62 538.93L523.51 527.39M554.80 590.10L567.60 588.08M535.26 650.26L544.42 659.42" stroke="#545667" stroke-width="2.16" fill="none"/>
<path d="M436.74 650.26L432.16 654.84M432.33 645.40L427.33 649.53M428.39 640.15L423.03 643.80M424.96 634.56L419.28 637.68M422.07 628.67L416.12 631.24M419.75 622.53L413.59 624.53M418.02 616.20L411.69 617.61M416.89 609.73L410.46 610.54M416.37 603.19L409.90 603.39M416.48 596.63L410.01 596.22M417.20 590.10L410.80 589.09M418.53 583.68L412.25 582.06M420.46 577.40L414.36 575.21M422.97 571.34L417.11 568.58M426.04 565.54L420.46 562.24M429.64 560.05L424.40 556.25M433.75 554.93L428.89 550.65M438.31 550.22L433.88 545.50M443.30 545.96L439.33 540.84M448.67 542.18L445.20 536.71M454.38 538.93L451.43 533.16M460.36 536.23L457.97 530.21M466.57 534.11L464.76 527.88M472.95 532.57L471.73 526.21M479.44 531.65L478.83 525.20M486.00 531.34L486.00 524.86M492.56 531.65L493.17 525.20M499.05 532.57L500.27 526.21M505.43 534.11L507.24 527.88M511.64 536.23L514.03 530.21M517.62 538.93L520.57 533.16M523.33 542.18L526.80 536.71M528.70 545.96L532.67 540.84M533.69 550.22L538.12 545.50M538.25 554.93L543.11 550.65M542.36 560.05L547.60 556.25M545.96 565.54L551.54 562.24M549.03 571.34L554.89 568.58M551.54 577.40L557.64 575.21M553.47 583.68L559.75 582.06M554.80 590.10L561.20 589.09M555.52 596.63L561.99 596.22M555.63 603.19L562.10 603.39M555.11 609.73L561.54 610.54M553.98 616.20L560.31 617.61M552.25 622.53L558.41 624.53M549.93 628.67L555.88 631.24M547.04 634.56L552.72 637.68M543.61 640.15L548.97 643.80M539.67 645.40L544.67 649.53M535.26 650.26L539.84 654.84" stroke="#545667" stroke-width="0.72" fill="none"/>
<text transform="translate(422.46 667.59) scale(0.8 1)" text-anchor="end" font-weight="bold" font-size="11.2" fill="#8e91a1">0</text>
<text transform="translate(397.25 589.99) scale(0.8 1)" text-anchor="end" font-weight="bold" font-size="11.2" fill="#8e91a1">10</text>
<text transform="translate(445.20 523.98) scale(0.8 1)" text-anchor="end" font-weight="bold" font-size="11.2" fill="#8e91a1">20</text>
<text transform="translate(529.07 518.73) scale(0.8 1)" text-anchor="middle" font-weight="bold" font-size="11.2" fill="#8e91a1">30</text>
<text transform="translate(574.75 589.99) scale(0.8 1)" text-anchor="start" font-weight="bold" font-size="11.2" fill="#8e91a1">40</text>
<text transform="translate(549.54 667.59) scale(0.8 1)" text-anchor="start" font-weight="bold" font-size="11.2" fill="#8e91a1">50</text>
<g transform="translate(486 601) rotate(77.4)"><path d="M7.199999999999999 0A7.199999999999999 7.199999999999999 0 0 0 -7.199999999999999 0L0 55.1Z" fill="url(#ng2)"/></g>
<text x="486" y="660.90" text-anchor="middle" font-size="17" fill="#ffffff">6</text>
</svg>
<!--UPTIME-->
<style>.up{top:510px;font-size:68.5px;line-height:68.5px;color:#00c9ff;-webkit-text-stroke:2.0px #292933;transform-origin:0 0}</style>
<div class="txt up" style="left:1315.99px;transform:scaleX(0.953)">0</div>
<div class="txt up" style="left:1342.70px;transform:scaleX(1.000)">,</div>
<div class="txt up" style="left:1352.58px;transform:scaleX(1.045)">7</div>
<div class="txt up" style="left:1385.78px;transform:scaleX(1.006)">4</div>
<div class="txt up" style="left:1427.79px;transform:scaleX(0.985)">h</div>
<div class="txt up" style="left:1458.10px;transform:scaleX(1.133)">r</div>
<div class="txt up" style="left:1477.28px;transform:scaleX(0.956)">s</div>
</body></html>
